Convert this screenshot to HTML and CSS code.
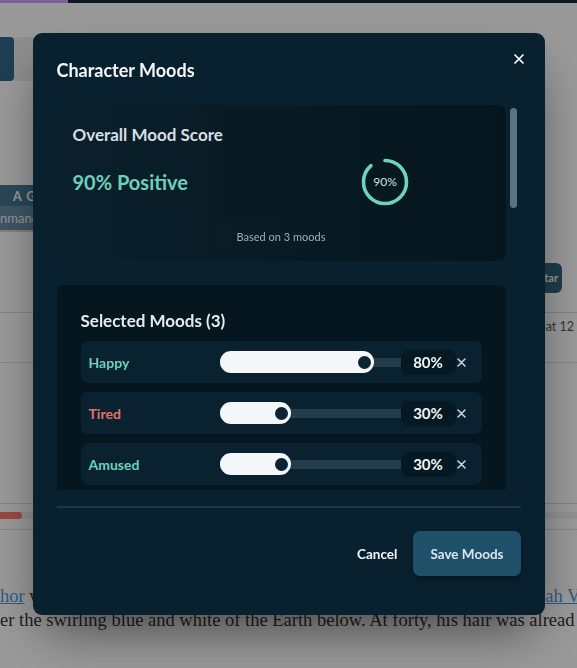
FILE: index.html
```html
<!DOCTYPE html>
<html lang="en">
<head>
<meta charset="utf-8">
<title>Character Moods</title>
<link rel="stylesheet" href="styles.css">
</head>
<body>
<div class="page">
  <div class="top-progress"><div class="top-progress-fill"></div></div>
  <div class="toolbar">
    <div class="tool-btn"></div>
    <div class="tool-field"></div>
  </div>
  <div class="crew">
    <div class="crew-head">A G</div>
    <div class="crew-row">nmand</div>
  </div>
  <div class="action-row"><span class="action-btn">Avatar</span></div>
  <div class="rule"></div>
  <div class="date-row">Sat 12</div>
  <div class="rule"></div>
  <div class="rule rule-low"></div>
  <div class="page-progress"><div class="page-progress-fill"></div></div>
  <div class="rule rule-tight"></div>
  <div class="story-links"><span><a class="story-link">hor</a> was</span><a class="story-link story-link-right">Noah Vega</a></div>
  <p class="story-line">er the swirling blue and white of the Earth below. At forty, his hair was alread</p>
</div>

<div class="backdrop">
  <div class="modal">
    <div class="modal-header">
      <h2 class="modal-title">Character Moods</h2>
      <button class="icon-btn close-btn" aria-label="Close">
        <svg width="12" height="12" viewBox="0 0 12 12"><path d="M2 2L10 10M10 2L2 10" stroke="#ffffff" stroke-width="1.7" stroke-linecap="round"/></svg>
      </button>
    </div>

    <div class="modal-scroll">
      <div class="modal-body">
        <section class="score-card">
          <h3 class="card-title">Overall Mood Score</h3>
          <div class="score-row">
            <div class="score-value">90% Positive</div>
            <svg class="score-ring" width="48" height="48" viewBox="0 0 48 48">
              <circle cx="24" cy="24" r="21.5" fill="none" stroke="#6fd2be" stroke-width="3.6" stroke-linecap="round" stroke-dasharray="119 200" transform="rotate(-90 24 24)"/>
              <text x="24" y="28.2" text-anchor="middle" class="ring-text">90%</text>
            </svg>
          </div>
          <div class="score-note"><span>Based on 3 moods</span></div>
        </section>

        <section class="moods-card">
          <h3 class="card-title moods-title">Selected Moods (3)</h3>
          <div class="mood-list">
            <div class="mood-row">
              <span class="mood-name mood-positive">Happy</span>
              <div class="slider"><div class="slider-fill" style="--v:0.8"><span class="slider-thumb"></span></div></div>
              <span class="mood-pct">80%</span>
              <button class="icon-btn remove-btn" aria-label="Remove Happy"><svg width="9" height="9" viewBox="0 0 9 9"><path d="M1 1L8 8M8 1L1 8" stroke="#cfd7db" stroke-width="1.5" stroke-linecap="round"/></svg></button>
            </div>
            <div class="mood-row">
              <span class="mood-name mood-negative">Tired</span>
              <div class="slider"><div class="slider-fill" style="--v:0.3"><span class="slider-thumb"></span></div></div>
              <span class="mood-pct">30%</span>
              <button class="icon-btn remove-btn" aria-label="Remove Tired"><svg width="9" height="9" viewBox="0 0 9 9"><path d="M1 1L8 8M8 1L1 8" stroke="#cfd7db" stroke-width="1.5" stroke-linecap="round"/></svg></button>
            </div>
            <div class="mood-row">
              <span class="mood-name mood-positive">Amused</span>
              <div class="slider"><div class="slider-fill" style="--v:0.3"><span class="slider-thumb"></span></div></div>
              <span class="mood-pct">30%</span>
              <button class="icon-btn remove-btn" aria-label="Remove Amused"><svg width="9" height="9" viewBox="0 0 9 9"><path d="M1 1L8 8M8 1L1 8" stroke="#cfd7db" stroke-width="1.5" stroke-linecap="round"/></svg></button>
            </div>
          </div>
        </section>

        <section class="add-card">
          <h3 class="card-title moods-title">Add a Mood</h3>
          <div class="search-box">Search moods…</div>
          <div class="chip-grid">
            <span class="chip">Joyful</span><span class="chip">Calm</span><span class="chip">Excited</span><span class="chip">Hopeful</span>
            <span class="chip">Proud</span><span class="chip">Grateful</span><span class="chip">Curious</span><span class="chip">Content</span>
            <span class="chip">Relieved</span><span class="chip">Inspired</span><span class="chip">Playful</span><span class="chip">Confident</span>
            <span class="chip">Sad</span><span class="chip">Angry</span><span class="chip">Anxious</span><span class="chip">Bored</span>
            <span class="chip">Lonely</span><span class="chip">Afraid</span><span class="chip">Jealous</span><span class="chip">Guilty</span>
            <span class="chip">Nervous</span><span class="chip">Confused</span><span class="chip">Stressed</span><span class="chip">Grumpy</span>
          </div>
        </section>

        <section class="notes-card">
          <h3 class="card-title moods-title">Mood Notes</h3>
          <div class="notes-box">Add notes about how this character is feeling…</div>
        </section>
      </div>
      <div class="scroll-thumb"></div>
    </div>

    <div class="modal-footer">
      <button class="btn btn-cancel">Cancel</button>
      <button class="btn btn-save">Save Moods</button>
    </div>
  </div>
</div>
</body>
</html>
```

FILE: styles.css
```css
* { box-sizing: border-box; }

html, body {
  margin: 0;
  padding: 0;
}

body {
  width: 577px;
  height: 668px;
  overflow: hidden;
  background: #ffffff;
  font-family: "Liberation Serif", serif;
}

/* ---------- page behind the dialog ---------- */
.page {
  width: 577px;
  overflow: hidden;
}

.top-progress {
  height: 3px;
  background: #132a3b;
}

.top-progress-fill {
  width: 68px;
  height: 3px;
  background: #cfa0ff;
}

.toolbar {
  display: flex;
  margin-top: 34px;
  height: 44px;
}

.tool-btn {
  width: 14px;
  background: #33678a;
  border-radius: 0 4px 4px 0;
}

.tool-field {
  width: 300px;
  background: #ececec;
}

.crew {
  width: 300px;
  margin-top: 104px;
  border-bottom: 2px solid #e9cccc;
  font-family: Lato, "Noto Sans", sans-serif;
}

.crew-head {
  height: 21px;
  padding-left: 13px;
  background: #467893;
  color: #ffffff;
  font-size: 12.5px;
  font-weight: 700;
  letter-spacing: 1px;
  line-height: 23px;
}

.crew-row {
  height: 24px;
  background: #6890a5;
  color: #eef6fa;
  font-size: 13px;
  line-height: 24px;
}

.action-row {
  display: flex;
  justify-content: flex-end;
  margin-top: 31px;
  padding-right: 15px;
  height: 30px;
  font-family: Lato, "Noto Sans", sans-serif;
}

.action-btn {
  height: 30px;
  padding: 0 4px 0 8px;
  border-radius: 6px;
  background: #33667f;
  color: #ffffff;
  font-size: 11px;
  font-weight: 700;
  line-height: 30px;
}

.rule {
  height: 1px;
  background: #dcdcdc;
  margin-top: 19px;
}

.date-row {
  height: 49px;
  padding: 6px 3px 0 0;
  text-align: right;
  font-family: Lato, "Noto Sans", sans-serif;
  font-size: 12.5px;
  line-height: 16px;
  color: #585858;
}

.date-row + .rule {
  margin-top: 0;
}

.rule-low {
  margin-top: 140px;
}

.page-progress {
  margin-top: 8px;
  height: 7px;
  background: #eef3f0;
}

.page-progress-fill {
  width: 22px;
  height: 7px;
  border-radius: 0 4px 4px 0;
  background: #ff7a6a;
}

.rule-tight {
  margin-top: 10px;
}

.story-links {
  display: flex;
  justify-content: space-between;
  margin-top: 54px;
  font-size: 18.5px;
  line-height: 24px;
  color: #333333;
  white-space: nowrap;
  overflow: hidden;
}

.story-link {
  color: #4a9bd6;
  text-decoration: underline;
}

.story-link-right {
  margin-right: -27px;
}

.story-line {
  margin: 0;
  font-size: 18.5px;
  line-height: 24px;
  color: #333333;
  white-space: nowrap;
  overflow: hidden;
}

/* ---------- dialog ---------- */
.backdrop {
  position: fixed;
  inset: 0;
  background: rgba(0, 0, 0, 0.4);
  display: flex;
  justify-content: center;
  align-items: flex-start;
  padding-top: 33px;
}

.modal {
  width: 512px;
  height: 582px;
  padding: 24px;
  border-radius: 9px;
  background: #09212f;
  box-shadow: 0 25px 50px -12px rgba(0, 0, 0, 0.55);
  display: flex;
  flex-direction: column;
  font-family: Lato, "Noto Sans", sans-serif;
  color: #e6edf0;
}

.modal-header {
  display: flex;
  justify-content: space-between;
  align-items: flex-start;
  height: 26px;
  margin-bottom: 22px;
  flex-shrink: 0;
}

.modal-title {
  margin: 0;
  font-size: 18px;
  line-height: 26px;
  font-weight: 700;
  color: #f4f7f9;
}

.icon-btn {
  border: 0;
  padding: 0;
  background: none;
  display: flex;
  align-items: center;
  justify-content: center;
  cursor: pointer;
}

.close-btn {
  width: 20px;
  height: 20px;
  margin: -8px -8px 0 0;
}

.modal-scroll {
  position: relative;
  height: 385px;
  flex-shrink: 0;
}

.modal-body {
  height: 100%;
  padding-right: 15px;
  overflow-y: auto;
  scrollbar-width: none;
  display: flex;
  flex-direction: column;
  gap: 24px;
}

.modal-body > * {
  flex-shrink: 0;
}

.scroll-thumb {
  position: absolute;
  top: 3px;
  right: 4px;
  width: 7px;
  height: 100px;
  border-radius: 4px;
  background: #5b7281;
}

.card-title {
  margin: 0;
  font-size: 17px;
  line-height: 24px;
  font-weight: 700;
  color: #d7dfe3;
}

.score-card {
  padding: 18px 16px 9px;
  border-radius: 8px;
  background: linear-gradient(90deg, #0b202c 0%, #071922 60%, #06161e 100%);
}

.score-row {
  display: grid;
  grid-template-columns: 1fr 1fr;
  align-items: center;
  height: 48px;
  margin-top: 11px;
}

.score-value {
  font-size: 20px;
  font-weight: 700;
  color: #6dd0bd;
}

.score-ring {
  justify-self: center;
  display: block;
}

.ring-text {
  font-family: Lato, "Noto Sans", sans-serif;
  font-size: 12px;
  fill: #cfe4df;
}

.score-note {
  margin-top: 16px;
  text-align: center;
  font-size: 11px;
  line-height: 16px;
  color: #a3aeb4;
}

.score-note span {
  display: inline-block;
  padding: 7px 22px;
  border-radius: 6px;
  background: rgba(255, 255, 255, 0.008);
}

.moods-card,
.add-card,
.notes-card {
  padding: 24px;
  border-radius: 8px;
  background: #05161e;
}

.moods-title {
  color: #e4eaed;
  margin-bottom: 8px;
}

.mood-list {
  display: flex;
  flex-direction: column;
  gap: 9px;
}

.mood-row {
  display: grid;
  grid-template-columns: 131px 1fr 48px 12px;
  align-items: center;
  height: 42px;
  padding: 0 14px 0 8px;
  border-radius: 7px;
  background: #0a2230;
}

.mood-name {
  font-size: 14px;
  font-weight: 700;
}

.mood-positive {
  color: #6ed0be;
}

.mood-negative {
  color: #e1726a;
}

.slider {
  display: flex;
  height: 22px;
  background: linear-gradient(#233d4a, #233d4a) center / 100% 9px no-repeat;
}

.slider-fill {
  width: calc(22px + var(--v) * (100% - 22px));
  height: 22px;
  padding-right: 3px;
  border-radius: 11px;
  background: #f4f7f9;
  display: flex;
  align-items: center;
  justify-content: flex-end;
}

.slider-thumb {
  width: 13px;
  height: 13px;
  border-radius: 50%;
  background: #0b2332;
}

.mood-pct {
  height: 25px;
  margin-left: -7px;
  border-radius: 8px;
  background: #061821;
  display: flex;
  align-items: center;
  justify-content: center;
  font-size: 15px;
  font-weight: 700;
  color: #f2f5f7;
}

.remove-btn {
  width: 12px;
  height: 12px;
  justify-self: end;
}

.search-box {
  height: 40px;
  padding: 0 12px;
  border-radius: 7px;
  background: #0a2230;
  color: #7d8d96;
  font-size: 14px;
  line-height: 40px;
  margin-bottom: 12px;
}

.chip-grid {
  display: grid;
  grid-template-columns: repeat(4, 1fr);
  gap: 8px;
}

.chip {
  height: 36px;
  border-radius: 7px;
  background: #0a2230;
  color: #cdd8dd;
  font-size: 13px;
  line-height: 36px;
  text-align: center;
}

.notes-box {
  height: 220px;
  padding: 12px;
  border-radius: 7px;
  background: #0a2230;
  color: #7d8d96;
  font-size: 14px;
}

.modal-footer {
  flex-shrink: 0;
  display: flex;
  justify-content: flex-end;
  margin-top: 16px;
  padding: 23px 0 15px;
  border-top: 2px solid #1c3747;
}

.btn {
  height: 45px;
  border: 0;
  font-family: Lato, "Noto Sans", sans-serif;
  font-size: 13.5px;
  font-weight: 700;
  cursor: pointer;
}

.btn-cancel {
  padding: 0 16px;
  background: none;
  color: #f3f6f8;
}

.btn-save {
  padding: 0 17px;
  border-radius: 7px;
  background: #1e5069;
  color: #dae6ee;
  box-shadow: 0 3px 6px rgba(0, 0, 0, 0.35);
}
```
